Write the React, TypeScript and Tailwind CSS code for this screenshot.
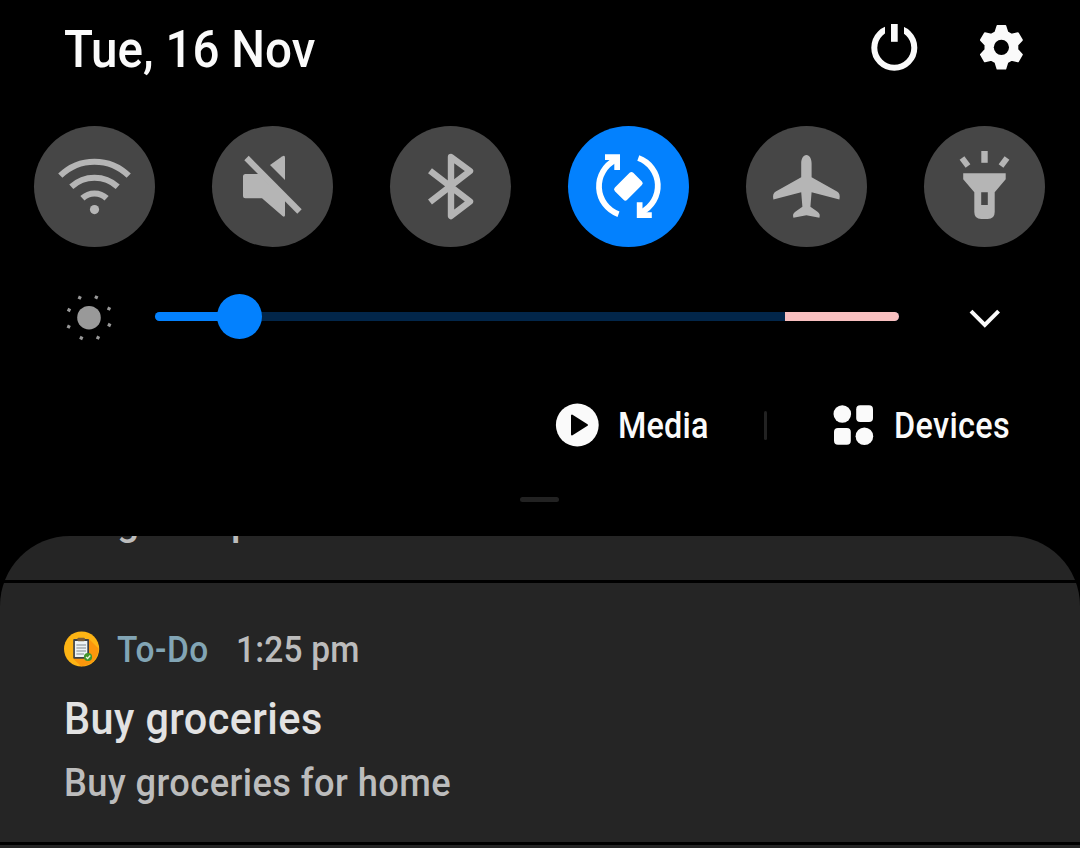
import type { ReactNode } from "react";

function PowerIcon() {
  return (
    <svg width="48" height="50" viewBox="870 22 48 50">
      <circle cx="894.3" cy="47.7" r="20" fill="none" stroke="#fafafa" strokeWidth="6" />
      <rect x="885" y="22" width="19" height="14" fill="#000" />
      <rect x="891" y="24" width="6.7" height="17.8" fill="#fafafa" />
    </svg>
  );
}

function GearIcon() {
  const points: string[] = [];
  for (let i = 0; i < 6; i++) {
    const a = (i * Math.PI) / 3;
    for (const [x, y] of [[-6, -15], [-4, -21.4], [4, -21.4], [6, -15]]) {
      points.push(`${x * Math.cos(a) - y * Math.sin(a)},${x * Math.sin(a) + y * Math.cos(a)}`);
    }
  }
  return (
    <svg width="48" height="50" viewBox="-24.4 -25.3 48 50">
      <polygon points={points.join(" ")} fill="#fafafa" stroke="#fafafa" strokeWidth="1.8" strokeLinejoin="round" />
      <circle r="7.6" fill="#000" />
    </svg>
  );
}

function Toggle({ active, children }: { active?: boolean; children: ReactNode }) {
  return (
    <button className={`size-[121px] rounded-full ${active ? "bg-[#0381fe] text-white" : "bg-[#464646] text-[#b5b5b5]"}`}>
      <svg width="121" height="121" viewBox="0 0 121 121" fill="currentColor">
        {children}
      </svg>
    </button>
  );
}

function RotateArrow() {
  return (
    <>
      <path d="M50.5 88.2A29.5 29.5 0 0 1 47.6 33.9" fill="none" stroke="currentColor" strokeWidth="5.8" />
      <path d="M37 28.3H52V44H46.3V34H37Z" />
    </>
  );
}

function Toggles() {
  return (
    <div className="mt-[54px] flex gap-[57px] pl-[34px]">
      <Toggle>
        <g fill="none" stroke="currentColor" strokeWidth="6">
          <path d="M26.3 49.7A48.8 48.8 0 0 1 94.7 49.7" />
          <path d="M37.3 60.7A34.4 34.4 0 0 1 83.7 60.7" />
          <path d="M48.4 72.2A17.6 17.6 0 0 1 72.6 72.2" />
        </g>
        <circle cx="60.5" cy="83.6" r="4.6" />
      </Toggle>
      <Toggle>
        <path d="M33.5 48H47L73 74V89.5Q72.5 91.5 70.5 90L50 72.3H33.5Q31 72.3 31 69.8V50.5Q31 48 33.5 48Z" />
        <path d="M58 39L70 30.5Q73 28.5 73 31.5V54Z" />
        <path d="M34.5 32L87.5 85.5" stroke="currentColor" strokeWidth="6.2" />
      </Toggle>
      <Toggle>
        <path
          d="M40 44.7L80 75.5L61 90V31L80 45L40 76"
          fill="none"
          stroke="currentColor"
          strokeWidth="6.4"
          strokeLinejoin="round"
        />
      </Toggle>
      <Toggle active>
        <RotateArrow />
        <g transform="rotate(180 60.4 60.1)">
          <RotateArrow />
        </g>
        <rect x="47.4" y="51.6" width="26" height="17.4" rx="2.6" transform="rotate(-45 60.4 60.3)" />
      </Toggle>
      <Toggle>
        <path d="M60.4 29C63.6 29 65.6 33 65.6 37.5V51.2L91 65.5C93.5 67 94.3 69.5 93.4 73.6L65.6 66.3L64.4 80.7L71.5 85.8C73.6 87.5 74.3 89 73.4 91.8L60.4 89.2L47.4 91.8C46.5 89 47.2 87.5 49.3 85.8L56.4 80.7L55.2 66.3L27.4 73.6C26.5 69.5 27.3 67 29.8 65.5L55.2 51.2V37.5C55.2 33 57.2 29 60.4 29Z" />
      </Toggle>
      <Toggle>
        <path
          fillRule="evenodd"
          d="M39.2 47.2H81.7V53.3L70.7 66.3V86Q70.7 93 63.7 93H57.3Q50.3 93 50.3 86V66.3L39.2 53.3ZM57.2 66.3V79H63.8V66.3Z"
        />
        <rect x="57.3" y="25" width="6.4" height="11.8" />
        <rect x="38" y="31" width="6" height="10" transform="rotate(-37 41 36)" />
        <rect x="77" y="31" width="6" height="10" transform="rotate(37 80 36)" />
      </Toggle>
    </div>
  );
}

const RAYS = [
  [79.7, 297.7],
  [96.3, 297.3],
  [109, 308.7],
  [109.3, 325],
  [98, 337.7],
  [81.3, 338],
  [68.7, 326.7],
  [69, 310],
];

function BrightnessRow() {
  return (
    <div className="mt-[44px] flex h-[54px] items-center">
      <svg className="ml-[62px] shrink-0" width="54" height="54" viewBox="62 291 54 54" fill="#999">
        <circle cx="89" cy="317.7" r="11.8" />
        {RAYS.map(([x, y]) => (
          <rect key={`${x}`} x={x - 1.6} y={y - 1.6} width="3.2" height="3.2" transform={`rotate(25 ${x} ${y})`} />
        ))}
      </svg>
      <div className="relative -mt-[3px] ml-[39px] flex h-[9px] w-[744px] items-center rounded-full bg-[#02264a]">
        <div className="h-[9px] w-[85px] rounded-l-full bg-[#0381fe]" />
        <div className="ml-auto h-[9px] w-[114px] rounded-r-full bg-[#f8bfbf]" />
        <div className="absolute left-[62px] size-[45px] rounded-full bg-[#0381fe]" />
      </div>
      <svg className="ml-[67px]" width="38" height="54" viewBox="966 291 38 54">
        <path d="M971 311.2L984.8 325L998.6 311.2" fill="none" stroke="#fafafa" strokeWidth="4" />
      </svg>
    </div>
  );
}

function Shortcuts() {
  return (
    <div className="mt-[55px] flex h-[50px] items-center text-[36px] leading-[50px] text-[#fafafa]">
      <svg className="ml-[555px] shrink-0" width="45" height="50" viewBox="555 400 45 50">
        <circle cx="577.3" cy="425" r="21.4" fill="#fafafa" />
        <path d="M572 415.5V434.5L587 425Z" fill="#000" stroke="#000" strokeWidth="2" strokeLinejoin="round" />
      </svg>
      <span className="ml-[18px] w-[146px] origin-left scale-x-[0.9] pt-[2px] tracking-[0.2px] whitespace-nowrap">Media</span>
      <div className="h-[29px] w-[3px] rounded-full bg-[#222]" />
      <svg className="ml-[65px] shrink-0" width="43" height="50" viewBox="832 400 43 50" fill="#fafafa">
        <circle cx="842.3" cy="414" r="8.8" />
        <rect x="856.2" y="405.3" width="16.8" height="16.8" rx="4" />
        <rect x="834" y="428" width="16.8" height="16.8" rx="4" />
        <circle cx="864.4" cy="436.3" r="8.8" />
      </svg>
      <span className="ml-[19px] w-[130px] origin-left scale-x-[0.9] pt-[2px] tracking-[0.4px] whitespace-nowrap">Devices</span>
    </div>
  );
}

function TodoIcon() {
  return (
    <svg className="shrink-0" width="36" height="36" viewBox="0 0 36 36">
      <circle cx="17.6" cy="18" r="17.6" fill="#fdb414" />
      <path d="M25 8L34.5 17.5A17.6 17.6 0 0 1 17 35.2L9.5 28Z" fill="#fb960c" />
      <rect x="9.2" y="8" width="15.8" height="19.8" rx="1" fill="#3d4146" />
      <rect x="10.9" y="10" width="12.4" height="16" fill="#edf3f5" />
      <rect x="13.4" y="6.8" width="7.5" height="3.4" rx="1" fill="#765c3a" />
      <path d="M12.4 14H22M12.4 17H22M12.4 20H22M12.4 23H20" stroke="#81898d" strokeWidth="1.2" />
      <circle cx="24" cy="26" r="4.1" fill="#43952d" />
      <path d="M22 26L23.6 27.5L26.3 24.5" fill="none" stroke="#e6f5d6" strokeWidth="1.3" />
    </svg>
  );
}

export default function App() {
  return (
    <main className="flex h-[848px] w-[1080px] flex-col overflow-hidden bg-black font-['Roboto',sans-serif] font-medium">
      <header className="flex h-[72px] items-end">
        <h1 className="-mb-px ml-[64px] w-[806px] origin-left scale-x-[0.915] text-[52px] leading-[46px] font-medium whitespace-nowrap text-[#fafafa]">
          Tue, 16 Nov
        </h1>
        <PowerIcon />
        <div className="ml-[59px]">
          <GearIcon />
        </div>
      </header>
      <Toggles />
      <BrightnessRow />
      <Shortcuts />
      <div className="mt-[47px] ml-[520px] h-[5px] w-[39px] rounded-full bg-[#222]" />

      <section className="mt-[33.5px] flex h-[312.5px] shrink-0 flex-col gap-[3px] overflow-hidden rounded-t-[70px] bg-black">
        <div className="relative h-[44px] shrink-0 overflow-hidden bg-[#252525] text-[39px] leading-[40px] text-[#bcbcbc]">
          <span className="absolute top-[-34px] left-[117px]">g</span>
          <span className="absolute top-[-34px] left-[231px]">p</span>
        </div>
        <article className="flex h-[259px] shrink-0 flex-col bg-[#252525] pl-[64px] whitespace-nowrap">
          <div className="mt-[46px] flex h-[40px] items-center text-[36px] leading-[40px]">
            <TodoIcon />
            <span className="ml-[17px] w-[119px] origin-left scale-x-[0.93] pt-[3px] tracking-[0.5px] text-[#82a5b5]">To-Do</span>
            <span className="origin-left scale-x-[0.93] pt-[3px] tracking-[0.2px] text-[#bcbcbc]">1:25 pm</span>
          </div>
          <h2 className="mt-[22.5px] w-[400px] origin-left scale-x-[0.92] text-[45px] leading-[56px] font-medium tracking-[0.45px] text-[#e2e2e2]">
            Buy groceries
          </h2>
          <p className="mt-[11px] w-[500px] origin-left scale-x-[0.93] text-[39px] leading-[50px] tracking-[0.45px] text-[#bcbcbc]">
            Buy groceries for home
          </p>
        </article>
        <div className="grow bg-[#252525]" />
      </section>
    </main>
  );
}
